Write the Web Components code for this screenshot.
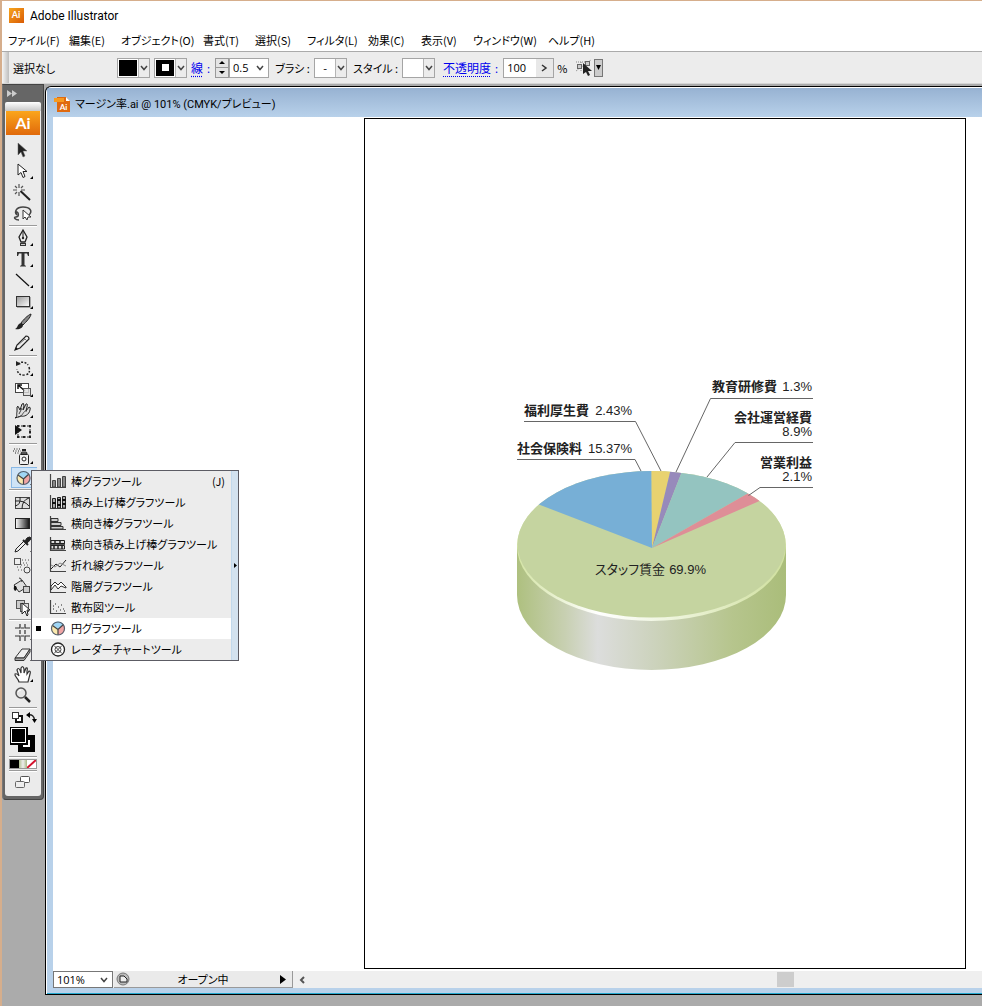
<!DOCTYPE html>
<html lang="ja">
<head>
<meta charset="utf-8">
<title>Adobe Illustrator</title>
<style>
html, body { margin: 0; height: 100%; }
body { font-family: "Noto Sans CJK JP", "Liberation Sans", sans-serif; font-size: 12px; line-height: 16px; font-feature-settings: "palt"; color: #000; background: #ababab; overflow: hidden; }
</style>
</head>
<body>
<illustrator-app></illustrator-app>
<script>
const base = `*{box-sizing:border-box} button,input,select{font:inherit;font-feature-settings:inherit;color:inherit;margin:0;padding:0;border:0;background:none;border-radius:0;appearance:none;outline:0} svg{display:block} a{color:inherit}`;
function define(name, render) {
  customElements.define(name, class extends HTMLElement {
    constructor() {
      super();
      this.attachShadow({ mode: 'open' });
    }
    connectedCallback() {
      const [css, html] = render(this);
      const t = document.createElement('template');
      t.innerHTML = `<style>${base}${css}</style>${html}`;
      this.shadowRoot.replaceChildren(t.content.cloneNode(true));
    }
  });
}

const pie = (x, y, r) => `<g transform="translate(${x} ${y})"><circle r="${r}" fill="#fff"/><path d="M-${r - 1} -4A${r} ${r} 0 0 1 ${r - 1} -4L0 1Z" fill="#9fd6f5"/><path d="M0 1L${r - 1} -4A${r} ${r} 0 0 1 0 ${r}Z" fill="#f0a5a5"/><path d="M0 1V${r}A${r} ${r} 0 0 1 -${r - 1} -4Z" fill="#fbe9ae"/><path d="M-${r - 1} -3L0 1L${r - 1} -4M0 1V${r}" fill="none" stroke="#444" stroke-width="1.2"/><circle r="${r}" fill="none" stroke="#56616e" stroke-width="1.2"/></g>`;

const toolIcons = {
  select: `<path d="M9 3V15L12 12L14 17L16 16L14 11H18Z" fill="#222" stroke="#666" stroke-width=".5"/>`,
  direct: `<path d="M9 3V14L12 11.500L14 16.500L16 15.500L14 10.500H18Z" fill="#fff" stroke="#222"/>`,
  wand: `<path d="M11.500 9L21 18" stroke="#222" stroke-width="2"/><path d="M10 2V6M10 10V14M4 8H8M12 8H16M6 4L8 6M14 4L12 6M6 12L8 10" stroke="#555" stroke-width="1.200"/>`,
  lasso: `<path d="M8 12C5 9 7 4 14 4S24 8 20 12M8 12C6 10 6 8 8 9S10 14 7 14S6 17 10 17" fill="none" stroke="#444" stroke-width="1.500"/><path d="M14 7V16L16 14L18 17L19 14H22Z" fill="#fff" stroke="#333"/>`,
  pen: `<path d="M14 2L10 9L12 14H16L18 9Z" fill="#eee" stroke="#222" stroke-width="1.300"/><path d="M14 3V9" stroke="#222"/><circle cx="14" cy="10" r="1.200"/><path d="M11 15H17V18H11Z" fill="#333"/><path d="M12 16.500H16" stroke="#ccc"/>`,
  type: `<path d="M8 3H20V7H19L18 4.500H15.500V16L17 17V17.500H11V17L12.500 16V4.500H10L9 7H8Z" fill="#333"/>`,
  line: `<path d="M7 4L20 16" stroke="#111" stroke-width="1.200"/>`,
  rect: `<rect x="7.500" y="5.500" width="13" height="10" fill="url(#lite)" stroke="#333"/><path d="M8 16.500H21.500V6" stroke="#aaa" fill="none"/>`,
  brush: `<path d="M22 2C19 3 14 8 12 11L14 13C17 10 22 5 22 2Z" fill="#888" stroke="#222"/><path d="M12 11C8 12 9 16 6 17C10 18 14 16 14 13Z" fill="#222"/>`,
  pencil: `<path d="M6 17L8 12L17 3Q20 3 20 6L11 15Z" fill="#eee" stroke="#222" stroke-width="1.200"/><path d="M6 17L7 14L9 16Z" fill="#111"/><path d="M15 5L18 8M9 12L16 6" stroke="#777"/>`,
  rotate: `<path d="M9 6C12 3 17 4 19 7M20 9Q22 16 16 17Q9 18 8 11" fill="none" stroke="#222" stroke-width="1.500" stroke-dasharray="2 1.500"/><path d="M7 8V3L12 6Z" fill="#222"/>`,
  scale: `<rect x="6.500" y="4.500" width="13" height="9" fill="#fff" stroke="#444"/><path d="M9 10V6H13M9 6L16 12" stroke="#111" stroke-width="1.500" fill="none"/><rect x="14.500" y="9.500" width="7" height="7" fill="#ddd" fill-opacity=".8" stroke="#555"/>`,
  warp: `<path d="M6 18C9 16 7 14 8 12L8 7Q9 5 10 8L11 10L13 4Q15 2 15 6L14 10L17 4Q19 3 18 7L17 11L20 7Q22 7 21 10C20 15 15 17 12 16Z" fill="#ddd" stroke="#222"/><path d="M9 17C14 17 14 10 18 11M10 14L13 8" stroke="#444" fill="none"/>`,
  free: `<path d="M6 4V14L13 9Z" fill="#111"/><rect x="9" y="5" width="12" height="11" fill="none" stroke="#222" stroke-dasharray="2 1"/><path d="M8 4H10V6H8ZM14 4H16V6H14ZM20 4H22V6H20ZM20 10H22V12H20ZM20 15H22V17H20ZM14 15H16V17H14ZM8 15H10V17H8Z"/>`,
  spray: `<rect x="10.500" y="8.500" width="9" height="10" rx="1" fill="#eee" stroke="#222"/><path d="M12 8Q12 6 13 6H17Q18 6 18 8Z" fill="#888" stroke="#222"/><rect x="13" y="3" width="4" height="2"/><circle cx="15" cy="13" r="2" fill="#fff" stroke="#222"/><path d="M5 3H11M4 5H12M6 7H11" stroke="#222" stroke-dasharray="1 1.500"/>`,
  graph: pie(14.5, 11, 6.5),
  mesh: `<rect x="6.500" y="5.500" width="14" height="11" fill="#ddd" stroke="#444"/><path d="M6 14Q12 13 11 5M6 9Q15 8 20 14M13 17Q13 8 20 6" stroke="#222" fill="none"/>`,
  gradient: `<rect x="6.500" y="5.500" width="14" height="10" fill="url(#grad)" stroke="#222"/>`,
  dropper: `<path d="M6 18L7 15L15 7L17 9L9 17Z" fill="#eee" stroke="#222"/><path d="M14 6L19 11" stroke="#222" stroke-width="2"/><path d="M16 7L18 4Q21 2 22 4Q22 6 18 9Z" stroke="#222" fill="#222"/>`,
  blend: `<rect x="5.500" y="3.500" width="6" height="6" fill="#eee" stroke="#555"/><circle cx="18" cy="15" r="3" fill="#eee" stroke="#444"/><path d="M13 5H20M14 8H20M8 12H14M9 15H14M12 10H19" stroke="#555" stroke-dasharray="1 2"/>`,
  bucket: `<path d="M5 9L13 4L18 11L10 16Z" fill="#ddd" stroke="#333"/><path d="M5 10Q4 13 6 15Q9 14 7 10Z" fill="#111"/><path d="M10 2Q12 1 13 6" stroke="#333" fill="none"/><rect x="14.500" y="10.500" width="6" height="6" fill="#ccc" stroke="#444"/>`,
  liveselect: `<rect x="7.500" y="3.500" width="8" height="8" fill="#ccc" stroke="#555"/><rect x="11.500" y="6.500" width="8" height="8" fill="#ddd" stroke="#555"/><path d="M13 6V17L16 14L18 19L19 18L18 13H21Z" fill="#fff" stroke="#222"/>`,
  slice: `<path d="M6 6H11V2M16 2V6H21M6 14H11V19M16 19V14H21M11 8V12M16 8V12M12 6H15M12 14H15" stroke="#333" fill="none" stroke-width="1.200"/>`,
  eraser: `<path d="M6 15L13 6H21L15 15Z" fill="#eee" stroke="#333"/><path d="M6 15V17.500H15L21 9V6L15 15Z" fill="#aaa" stroke="#333"/>`,
  hand: `<path d="M10 18C9 14 5 12 6 10Q8 9 10 12L8 6Q9 3 11 6L12 9L12 4Q14 1 15 5V9L17 4Q19 3 18 7L18 10L20 7Q22 7 21 10L19 18Z" fill="#fff" stroke="#333" stroke-width="1.200"/>`,
  zoom: `<circle cx="12" cy="8" r="5" fill="#e6e6e6" stroke="#555" stroke-width="1.500"/><path d="M16 12L21 17" stroke="#222" stroke-width="2.500"/><path d="M9 7Q10 5 12 5" stroke="#fff" fill="none"/>`
};

define('app-title', () => [`
:host{display:flex;align-items:center;height:29px;padding-left:7px;gap:6px;background:#fff;font-family:Roboto,sans-serif}
`, `<svg width="15" height="15" viewBox="0 0 15 15" aria-hidden="true"><defs><linearGradient id="o" x2="1" y2="1"><stop stop-color="#f7a51d"/><stop offset="1" stop-color="#d95b05"/></linearGradient></defs><rect width="15" height="15" fill="url(#o)"/><text x="7" y="10" text-anchor="middle" font-family="Lato" font-weight="700" font-size="9" fill="#fff">Ai</text></svg><slot></slot>`]);

define('menu-bar', () => [`
:host{display:block;background:#fff;height:21px;padding-left:6px}
nav{display:grid;grid-template-columns:61px 52px 82px 52px 52px 61px 53px 52px 75px 60px;font-size:11px}
button{text-align:left;white-space:nowrap;line-height:20px}
`, `<nav>${['ファイル(F)', '編集(E)', 'オブジェクト(O)', '書式(T)', '選択(S)', 'フィルタ(L)', '効果(C)', '表示(V)', 'ウィンドウ(W)', 'ヘルプ(H)'].map(t => `<button>${t}</button>`).join('')}</nav>`]);

const chevron = `<svg class="chev" width="8" height="6" viewBox="0 0 8 6" aria-hidden="true"><path d="M1 1L4 4.500L7 1" fill="none" stroke="#444" stroke-width="1.500"/></svg>`;

define('swatch-combo', el => [`
:host{display:block}
button{display:flex;height:20px;border:1px solid #a5a5a5;background:#fff;width:100%;padding:1px}
.sw{flex:1;display:grid;place-items:center;height:16px}
.black{background:#000}
.sw i{display:block;width:7px;height:7px;background:#fff}
.arrow{width:11px;height:18px;margin:-1px;margin-left:1px;background:#ececec;border-left:1px solid #b5b5b5;display:grid;place-items:center}
`, `<button aria-label="${el.getAttribute('label')}" aria-haspopup="listbox"><span class="sw ${el.hasAttribute('black') ? 'black' : ''}">${el.hasAttribute('ring') ? '<i></i>' : '<slot></slot>'}</span><span class="arrow">${chevron}</span></button>`]);

define('control-bar', () => [`
:host{display:flex;align-items:center;height:33px;background:#ececec;border-top:1px solid #aaa;border-bottom:1px solid #d5d5d5;font-size:11px;white-space:nowrap}
.grip{width:7px;align-self:stretch;background:linear-gradient(90deg,#f5f5f5,#bdbdbd);margin-right:4px}
.state{width:104px}
swatch-combo{width:33px;margin-right:4px}
a{color:#00e;text-decoration:underline dotted;text-underline-offset:3px;font-size:12px}
.colon{color:#00e;margin:0 5px 0 4px}
.spin{display:grid;width:14px;height:20px;border:1px solid #999;background:#e4e4e4}
.spin button{display:grid;place-items:center}
.spin button+button{border-top:1px solid #999}
.combo{display:grid;grid-template-columns:1fr 16px;align-items:center;width:40px;height:20px;border:1px solid #a5a5a5;background:#fff;font:11px/16px "Open Sans",sans-serif}
.combo select{grid-area:1/1/2/3;padding-left:3px;width:100%}
.combo svg{grid-area:1/2;pointer-events:none;justify-self:center}
.lab{width:39px;margin-left:6px}
.style{width:49px;margin-left:2px}
.op{margin-left:4px;font-size:12px}
.value{display:flex;width:51px;height:20px;border:1px solid #a5a5a5;background:#fff;font:11px/16px "Open Sans",sans-serif;margin-right:3px}
.value input{width:32px;padding-left:3px}
.value button{flex:1;display:grid;place-items:center;background:#e8e8e8}
.similar{display:flex;align-items:center;margin-left:9px;gap:1px}
.similar .drop{display:grid;place-items:center;width:9px;height:18px;border:1px solid #777;background:#ccc}
`, `<span class="grip"></span><span class="state">選択なし</span>
<swatch-combo black label="塗り"></swatch-combo><swatch-combo black ring label="線のカラー"></swatch-combo>
<a href="#stroke">線</a><span class="colon">:</span>
<span class="spin"><button aria-label="線幅を上げる"><svg width="8" height="5"><path d="M1 4L4 1L7 4Z"/></svg></button><button aria-label="線幅を下げる"><svg width="8" height="5"><path d="M1 1L4 4L7 1Z"/></svg></button></span>
<span class="combo"><select aria-label="線幅"><option>0.5</option></select>${chevron}</span>
<span class="lab">ブラシ :</span><swatch-combo label="ブラシ">-</swatch-combo>
<span class="style">スタイル :</span><swatch-combo label="スタイル"></swatch-combo>
<a class="op" href="#opacity">不透明度</a><span class="colon">:</span>
<span class="value"><input id="opacity" aria-label="不透明度" value="100"><button aria-label="不透明度スライダ"><svg width="7" height="8"><path d="M1 1L5 4L1 7" fill="none" stroke="#333" stroke-width="1.500"/></svg></button></span><label for="opacity">%</label>
<span class="similar"><button aria-label="類似オブジェクトを選択"><svg width="17" height="18" viewBox="0 0 17 18"><path d="M0 3H13M0 12L15 1M5 3V12" stroke="#888" stroke-dasharray="1 1"/><rect x="1.500" y="5.500" width="4" height="4" fill="#ccc" stroke="#666"/><rect x="9.500" y="2.500" width="4" height="4" fill="#ccc" stroke="#666"/><path d="M7 4V15L10 13L12 17L14 16L12 12H16Z" fill="#222"/></svg></button><button class="drop" aria-label="オプション"><svg width="5" height="5"><path d="M0 0L2.500 5L5 0Z"/></svg></button></span>`]);

const T = (id, label, fly) => ({ id, label, fly });
const groups = [
  [T('select', '選択'), T('direct', 'ダイレクト選択', 1), T('wand', '自動選択'), T('lasso', 'なげなわ')],
  [T('pen', 'ペン', 1), T('type', '文字', 1), T('line', '直線', 1), T('rect', '長方形', 1), T('brush', 'ブラシ'), T('pencil', '鉛筆', 1)],
  [T('rotate', '回転', 1), T('scale', '拡大・縮小', 1), T('warp', 'ワープ', 1), T('free', '自由変形')],
  [T('spray', 'シンボルスプレー', 1), T('graph', '円グラフ', 1)],
  [T('mesh', 'メッシュ'), T('gradient', 'グラデーション'), T('dropper', 'スポイト', 1), T('blend', 'ブレンド'), T('bucket', 'ライブペイント'), T('liveselect', 'ライブペイント選択')],
  [T('slice', 'スライス', 1), T('eraser', '消しゴム', 1), T('hand', '手のひら', 1), T('zoom', 'ズーム')]
];

define('tool-button', el => [`
:host{display:block}
button{display:block;width:28px;height:21px}
:host([active]) button{background:linear-gradient(#cfe4f7,#cfe4f7) 2px 0 no-repeat;box-shadow:inset 2px 0 #ebebeb,inset 3px 1px #8ab9e6,inset 0 -1px #8ab9e6}
`, `<button aria-label="${el.getAttribute('label')}"><svg width="28" height="21" viewBox="0 0 28 21" fill="#222"><defs><linearGradient id="lite" x2="1" y2="1"><stop stop-color="#999"/><stop offset="1" stop-color="#fff"/></linearGradient><linearGradient id="grad"><stop stop-color="#fff"/><stop offset="1" stop-color="#111"/></linearGradient></defs>${toolIcons[el.getAttribute('icon')]}${el.hasAttribute('flyout') ? '<path d="M24 15V18H21Z" fill="#000"/>' : ''}</svg></button>`]);

define('tool-box', () => [`
:host{display:block;width:42px;align-self:start;background:#666;border:1px solid #444;border-left-color:#777;padding:0 2px 3px;border-radius:0 0 4px 4px}
.expand{display:block;height:17px;padding:5px 2px}
.grip{height:9px;background:linear-gradient(#fff,#c8c8c8);border-radius:2px 2px 0 0}
.panel{background:#ebebeb;padding:0 1px 4px;border-radius:0 0 3px 3px}
.logo{display:grid;place-items:center;height:24px;background:linear-gradient(#fba51c,#e0690b);color:#fff;font:700 16px/24px Lato,sans-serif;margin-bottom:5px}
.tools{padding:0 3px}
hr{height:2px;margin:1px 0;border:0;border-top:1px solid #9a9a9a;background:#fff}
.mini{display:flex;justify-content:space-between;height:14px;align-items:center;padding:0 0 0 3px}
.paint{height:31px;display:grid;align-items:center}
.modes{display:grid;grid-template-columns:repeat(3,1fr);height:10px;border:1px solid #999;margin:1px 0}
.modes button:first-child{background:#000}.modes button:nth-child(2){background:linear-gradient(90deg,#b0bf90,#eee,#a9ba86)}.modes button:last-child{background:#fff}
.screen{display:grid;place-items:center;width:100%;height:19px}
`, `<button class="expand" aria-label="パネルを展開"><svg width="10" height="7"><path d="M0 0L5 3.500L0 7ZM5 0L10 3.500L5 7Z" fill="#ccc"/></svg></button>
<div class="grip"></div><div class="panel"><div class="logo">Ai</div><div class="tools">
${groups.map(g => g.map(t => `<tool-button icon="${t.id}" label="${t.label}ツール" ${t.fly ? 'flyout' : ''} ${t.id === 'graph' ? 'active' : ''}></tool-button>`).join('')).join('<hr>')}
<hr><div class="mini"><button aria-label="初期設定の塗りと線"><svg width="11" height="11"><path d="M4 4H10V10H4Z" fill="#fff" stroke="#111" stroke-width="2"/><rect x=".5" y=".5" width="6" height="6" fill="#fff" stroke="#333"/></svg></button><button aria-label="塗りと線を入れ替え"><svg width="11" height="11"><path d="M2 3Q8 2 8.500 8" fill="none" stroke="#222" stroke-width="1.500"/><path d="M0 3L4 0V6ZM6 7H11L8.500 11Z"/></svg></button></div>
<button class="paint" aria-label="塗りと線"><svg width="28" height="26" viewBox="0 0 28 26"><path d="M9 8H26V25H9Z"/><path d="M14 13H21V20H14Z" fill="#fff"/><rect x="1" y="0" width="18" height="18"/><rect x="2.500" y="1.500" width="14" height="14" stroke="#fff"/></svg></button>
<hr><div class="modes"><button aria-label="カラー"></button><button aria-label="グラデーション"></button><button aria-label="なし"><svg width="9" height="8"><path d="M0 8L9 0" stroke="#d3122d" stroke-width="2"/></svg></button></div><hr>
<button class="screen" aria-label="スクリーンモード"><svg width="18" height="13"><rect x="6.500" y=".5" width="9" height="6" rx="1" fill="#fff" stroke="#555"/><rect x="1.500" y="5.500" width="9" height="6" rx="1" fill="#eee" stroke="#666"/></svg></button>
</div></div>`]);

const axis = `<path d="M1.500 0V13.500H17" fill="none" stroke="#444" stroke-width="1.200"/>`;
const graphIcons = {
  bar: `${axis}<path d="M3.500 6.500H6.500V13H3.500ZM8.500 4.500H11.500V13H8.500ZM13.500 2.500H16.500V13H13.500Z" fill="#888" stroke="#444"/>`,
  stack: `${axis}<path d="M3.500 3.500H6.500V13H3.500ZM8.500 2.500H11.500V13H8.500ZM13.500 1.500H16.500V13H13.500Z" fill="#aaa" stroke="#222"/><path d="M3 8H7M8 5H12M8 10H12M13 5H17M13 9H17" stroke="#111" stroke-width="2"/>`,
  hbar: `${axis}<path d="M2 2.500H9V5.500H2ZM2 6.500H12V9.500H2ZM2 10.500H14V13H2Z" fill="#ccc" stroke="#333"/>`,
  hstack: `${axis}<path d="M2 3.500H15.500V6.500H2ZM2 8.500H15.500V12H2Z" fill="#ddd" stroke="#222"/><path d="M6 3V6M11 3V6M5 8V12M9 8V12M13 8V12M2 7H16" stroke="#222" stroke-width="1.500"/>`,
  line: `${axis}<path d="M2 11L7 6L11 9L17 2" fill="none" stroke="#222"/><path d="M2 7L6 9L11 5L17 8" fill="none" stroke="#888"/>`,
  area: `${axis}<path d="M2 7L6 3L9 6L12 3L17 8V9L12 7L9 10L6 6L2 11Z" fill="#fff" stroke="#333"/>`,
  scatter: `${axis}<path d="M4 9H5M6 4H7M7 11H8M9 7H10M11 10H12M12 5H13M14 9H15M15 11H16M4 6H5" stroke="#222"/>`,
  pie: pie(9, 7.5, 6.5),
  radar: `<circle cx="9" cy="7.500" r="6.500" fill="#fff" stroke="#222" stroke-width="1.300"/><path d="M5 3.500L13 11.500M13 3.500L5 11.500" stroke="#444"/><circle cx="9" cy="7.500" r="3" fill="none" stroke="#444"/>`
};

define('graph-item', el => [`
:host{display:block}
button{display:grid;grid-template-columns:17px 22px 1fr auto;align-items:center;width:100%;height:21px;text-align:left;white-space:nowrap;padding:0 6px 1px 0}
:host([checked]) button{background:#fff}
i{display:block;width:5px;height:5px;margin-left:4px}
:host([checked]) i{background:#000}
`, `<button role="menuitemradio" aria-checked="${el.hasAttribute('checked')}"><i></i><svg width="18" height="15" viewBox="0 0 18 15">${graphIcons[el.getAttribute('icon')]}</svg><slot></slot><slot name="key"></slot></button>`]);

define('graph-menu', () => [`
:host{display:grid;grid-template-columns:1fr 7px;width:208px;border:1px solid #5c5c64;background:#ececec;font-size:11px}
.tear{display:grid;place-items:center;background:#d3e2ef;border-left:1px solid #c2d9ec}
`, `<div role="menu">${[['bar', '棒グラフツール'], ['stack', '積み上げ棒グラフツール'], ['hbar', '横向き棒グラフツール'], ['hstack', '横向き積み上げ棒グラフツール'], ['line', '折れ線グラフツール'], ['area', '階層グラフツール'], ['scatter', '散布図ツール'], ['pie', '円グラフツール'], ['radar', 'レーダーチャートツール']].map(([i, t]) => `<graph-item icon="${i}" ${i === 'pie' ? 'checked' : ''}><span>${t}</span>${i === 'bar' ? '<span slot="key">(J)</span>' : ''}</graph-item>`).join('')}</div><button class="tear" aria-label="切り離す"><svg width="3" height="5"><path d="M0 0L3 2.500L0 5Z"/></svg></button>`]);

define('pie-chart', () => [`
:host{display:block}
text{font-family:"Noto Sans CJK JP",sans-serif;font-size:13px;font-weight:700;fill:#222}
.n{font-family:"Liberation Sans",sans-serif;font-weight:400}
.s{font-weight:400}
.e{text-anchor:end}
.l{fill:none;stroke:#666}
`, `<svg width="330" height="310" viewBox="0 0 330 310" role="img" aria-label="マージン率の円グラフ">
<defs><linearGradient id="side"><stop stop-color="#aec07f"/><stop offset=".18" stop-color="#c8d0b2"/><stop offset=".3" stop-color="#dcdddc"/><stop offset=".5" stop-color="#cdd3be"/><stop offset=".8" stop-color="#b6c58d"/><stop offset="1" stop-color="#aabd7a"/></linearGradient>
<linearGradient id="rim"><stop stop-color="#d4e4a5"/><stop offset=".3" stop-color="#fff"/><stop offset=".55" stop-color="#f0f6e0"/><stop offset="1" stop-color="#d0e09f"/></linearGradient>
<clipPath id="face"><ellipse cx="151.500" cy="174.300" rx="134" ry="73.300"/></clipPath></defs>
<path d="M17 176V225A134.500 75 0 0 0 286 225V176Z" fill="url(#side)"/>
<ellipse cx="151.500" cy="176" rx="134.500" ry="75" fill="url(#rim)"/>
<g clip-path="url(#face)"><path d="M0 90H310V260H0Z" fill="#c5d4a0"/>
<path d="M152 178L-4 118V60H151.300Z" fill="#77afd6"/><path d="M152 178L151.300 60L181 56Z" fill="#e8d270"/><path d="M152 178L181 56L199 58Z" fill="#978abb"/><path d="M152 178L199 58L290 50L294.500 97Z" fill="#94c4c0"/><path d="M152 178L294.500 97L312 108Z" fill="#de8e97"/></g>
<path class="l" d="M24 51.500H135.500L161 101M17 89.500H135L141 101M313 28.500H210.500L176 102M313 72.500H235L207 107M313 117.500H260L248.500 125.500"/>
<text x="24" y="45">福利厚生費</text><text class="n e" x="132" y="45">2.43%</text>
<text x="17" y="83">社会保険料</text><text class="n e" x="132" y="83">15.37%</text>
<text x="212" y="21">教育研修費</text><text class="n e" x="312" y="21">1.3%</text>
<text class="e" x="312" y="52">会社運営経費</text><text class="n e" x="312" y="66">8.9%</text>
<text class="e" x="312" y="97">営業利益</text><text class="n e" x="312" y="111">2.1%</text>
<text class="s" x="95" y="204">スタッフ賃金</text><text class="n e" x="206" y="204">69.9%</text>
</svg>`]);

define('document-window', () => [`
:host{display:grid;grid-template-rows:30px 1fr 17px;border:solid #000;border-width:1px 0 1px 1px;border-radius:6px 0 0 0;background:#b8d1ea;padding:0 0 6px 7px;box-shadow:inset 1px 1px #fff,inset 0 -1px #25a9cf;overflow:hidden;min-width:0}
header{display:flex;align-items:center;gap:4px;margin:1px 0 0 -6px;padding:4px 0 0 7px;background:linear-gradient(#97b2d2,#b8d1ea);white-space:nowrap;font-family:Roboto,"Noto Sans CJK JP",sans-serif;font-size:11px}
.canvas{display:grid;grid-template-columns:minmax(0,602px);background:#fff;padding:1px 16px 2px 311px}
.artboard{display:grid;place-items:center;border:1px solid #000;padding-bottom:38px}
footer{display:grid;grid-template-columns:60px 1px 179px 1fr;background:#efefef}
.zoom{display:grid;grid-template-columns:1fr 17px;align-items:center;border:1px solid #777;background:#fff;font:11px/15px "Open Sans",sans-serif}
.zoom select{grid-area:1/1/2/3;padding-left:3px;width:100%}
.zoom svg{grid-area:1/2;pointer-events:none;justify-self:center}
.status{grid-column:3;display:grid;grid-template-columns:18px 1fr 18px;align-items:center;justify-items:center;border-right:1px solid #999;border-bottom:1px solid #999;background:#eaeaea;font-size:11px;line-height:15px}
.scroll{display:grid;grid-template-columns:21px 1fr;align-items:center}
.left{display:grid;place-items:center;width:17px}
.track{display:grid;grid-template-columns:463fr 17px 188fr;height:15px}
.thumb{grid-column:2;background:#cdcdcd}
`, `<header><svg width="17" height="17" viewBox="0 0 17 17" aria-hidden="true"><path d="M3 1H12L16 5V16H3Z" fill="#e06a10"/><path d="M0 2H10V6H0Z" fill="#f79a20"/><path d="M12 1V5H16Z" fill="#fff"/><text x="9.500" y="14" text-anchor="middle" font-family="Lato" font-weight="700" font-size="8" fill="#fff">Ai</text></svg><slot></slot></header>
<div class="canvas"><div class="artboard"><pie-chart></pie-chart></div></div>
<footer><span class="zoom"><select aria-label="表示倍率"><option>101%</option></select>${chevron}</span><div class="status"><svg width="14" height="14" viewBox="0 0 14 14"><circle cx="7" cy="7" r="6" fill="#bbb" stroke="#777"/><path d="M4 4H8L11 7V10H4Z" fill="#eee" stroke="#222"/></svg><span>オープン中</span><svg width="6" height="9"><path d="M0 0L6 4.500L0 9Z"/></svg></div>
<div class="scroll"><button class="left" aria-label="左へスクロール"><svg width="6" height="8"><path d="M5 1L2 4L5 7" fill="none" stroke="#555" stroke-width="2"/></svg></button><div class="track"><span class="thumb"></span></div></div></footer>`]);

/* Slotted title text takes its font from the window host. */
define('illustrator-app', () => [`
:host{display:grid;box-sizing:border-box;grid-template-rows:29px 21px 33px 1fr;height:100vh;border:solid #d6ae8c;border-width:1px 0 0 2px}
main{display:grid;grid-template-columns:42px 1fr;gap:1px;min-height:0;position:relative;padding-bottom:11px;background:#ababab}
document-window{margin-top:2px}
graph-menu{position:absolute;left:29px;top:386px}
`, `<app-title>Adobe Illustrator</app-title><menu-bar></menu-bar><control-bar></control-bar>
<main><tool-box></tool-box><document-window>マージン率.ai @ 101% (CMYK/プレビュー)</document-window><graph-menu></graph-menu></main>`]);
</script>
</body>
</html>
